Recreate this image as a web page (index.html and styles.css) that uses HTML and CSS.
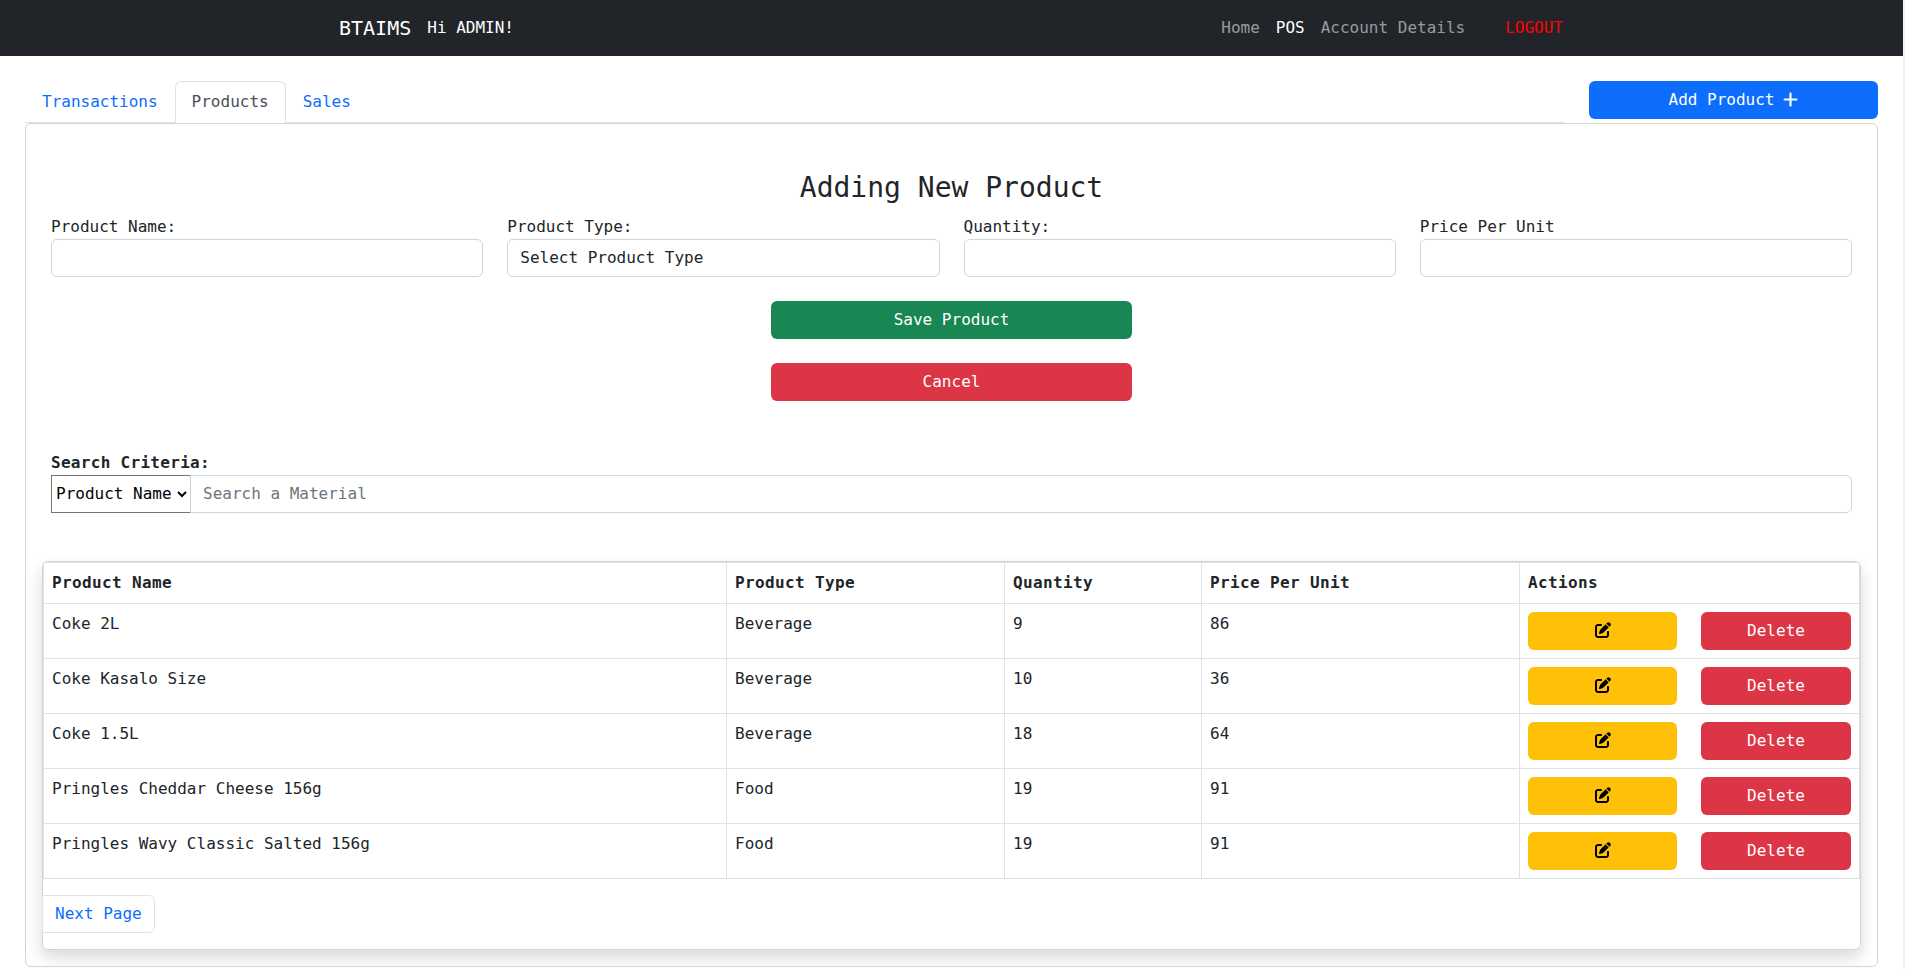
FILE: index.html
```html
<!DOCTYPE html>
<html lang="en">
<head>
<meta charset="utf-8">
<title>BTAIMS</title>
<link rel="stylesheet" href="styles.css">
</head>
<body>
<svg class="sprite" aria-hidden="true">
  <symbol id="edit" viewBox="0 0 512 512"><path d="M471.6 21.7c-21.9-21.9-57.3-21.9-79.2 0L362.3 51.7l97.9 97.9 30.1-30.1c21.9-21.9 21.9-57.3 0-79.2L471.6 21.7zm-299.2 220c-6.1 6.1-10.8 13.6-13.5 21.9l-29.6 88.8c-2.9 8.6-.6 18.1 5.8 24.6s15.9 8.7 24.6 5.8l88.8-29.6c8.2-2.7 15.7-7.4 21.9-13.5L437.7 172.3 339.7 74.3 172.4 241.7zM96 64C43 64 0 107 0 160V416c0 53 43 96 96 96H352c53 0 96-43 96-96V320c0-17.7-14.3-32-32-32s-32 14.3-32 32v96c0 17.7-14.3 32-32 32H96c-17.7 0-32-14.3-32-32V160c0-17.7 14.3-32 32-32h96c17.7 0 32-14.3 32-32s-14.3-32-32-32H96z"/></symbol>
</svg>
<header class="navbar">
  <div class="nav-inner">
    <a class="brand">BTAIMS</a>
    <span class="greeting">Hi ADMIN!</span>
    <nav class="nav-links">
      <a>Home</a><a class="current">POS</a><a>Account Details</a><a class="logout">LOGOUT</a>
    </nav>
  </div>
</header>
<main>
  <div class="top-row">
    <div class="tabs"><a class="tab">Transactions</a><a class="tab active">Products</a><a class="tab">Sales</a></div>
    <button class="btn blue add">Add Product <svg class="plus" viewBox="0 0 448 448"><path d="M256 48c0-17.7-14.3-32-32-32s-32 14.3-32 32V192H48c-17.7 0-32 14.3-32 32s14.3 32 32 32H192V400c0 17.7 14.3 32 32 32s32-14.3 32-32V256H400c17.7 0 32-14.3 32-32s-14.3-32-32-32H256V48z"/></svg></button>
  </div>
  <section class="card">
    <form class="product-form">
      <h3>Adding New Product</h3>
      <div class="fields">
        <label>Product Name:<input class="control"></label>
        <label>Product Type:<select class="control"><option>Select Product Type</option></select></label>
        <label>Quantity:<input class="control"></label>
        <label>Price Per Unit<input class="control"></label>
      </div>
      <div class="form-actions">
        <button type="button" class="btn green">Save Product</button>
        <button type="button" class="btn red">Cancel</button>
      </div>
    </form>
    <div class="search">
      <b>Search Criteria:</b>
      <div class="search-group">
        <select class="criteria"><option>Product Name</option></select>
        <input class="control" placeholder="Search a Material">
      </div>
    </div>
    <div class="table-card">
      <table>
        <colgroup><col class="c-name"><col class="c-type"><col class="c-qty"><col class="c-price"><col></colgroup>
        <thead><tr><th>Product Name</th><th>Product Type</th><th>Quantity</th><th>Price Per Unit</th><th>Actions</th></tr></thead>
        <tbody>
          <tr><td>Coke 2L</td><td>Beverage</td><td>9</td><td>86</td><td><div class="actions"><button class="btn yellow"><svg><use href="#edit"/></svg></button><button class="btn red">Delete</button></div></td></tr>
          <tr><td>Coke Kasalo Size</td><td>Beverage</td><td>10</td><td>36</td><td><div class="actions"><button class="btn yellow"><svg><use href="#edit"/></svg></button><button class="btn red">Delete</button></div></td></tr>
          <tr><td>Coke 1.5L</td><td>Beverage</td><td>18</td><td>64</td><td><div class="actions"><button class="btn yellow"><svg><use href="#edit"/></svg></button><button class="btn red">Delete</button></div></td></tr>
          <tr><td>Pringles Cheddar Cheese 156g</td><td>Food</td><td>19</td><td>91</td><td><div class="actions"><button class="btn yellow"><svg><use href="#edit"/></svg></button><button class="btn red">Delete</button></div></td></tr>
          <tr><td>Pringles Wavy Classic Salted 156g</td><td>Food</td><td>19</td><td>91</td><td><div class="actions"><button class="btn yellow"><svg><use href="#edit"/></svg></button><button class="btn red">Delete</button></div></td></tr>
        </tbody>
      </table>
      <a class="page-link">Next Page</a>
    </div>
  </section>
</main>
</body>
</html>
```
FILE: styles.css
```css
* { box-sizing: border-box; }
html { overflow: hidden; }
body {
  margin: 0;
  height: 969px;
  border-right: 2px solid #f1f1f1;
  background: #fff;
  color: #212529;
  font: 16px/24px "DejaVu Sans Mono", "Lucida Console", monospace;
}
button, input, select { font: inherit; color: inherit; }
.sprite { display: none; }

.navbar { height: 56px; background: #212529; color: #fff; }
.nav-inner { display: flex; align-items: center; height: 56px; padding: 0 340px 0 339px; }
.brand { font-size: 20px; margin-right: 16px; }
.nav-links { display: flex; gap: 16px; margin-left: auto; color: rgba(255, 255, 255, .55); }
.nav-links .current { color: #fff; }
.nav-links .logout { margin-left: 24px; color: #f00; }

main { padding: 25px 25px 0; }
.top-row { display: flex; gap: 24px; align-items: flex-start; height: 42px; }
.tabs { display: flex; flex: 1; height: 42px; border-bottom: 1px solid #dee2e6; }
.tab {
  height: 42px;
  padding: 8px 16px;
  border: 1px solid transparent;
  border-radius: 6px 6px 0 0;
  color: #0d6efd;
}
.tab.active { background: #fff; border-color: #dee2e6 #dee2e6 #fff; color: #495057; }

.btn {
  display: flex;
  align-items: center;
  justify-content: center;
  height: 38px;
  padding: 0 12px;
  border: 0;
  border-radius: 6px;
  color: #fff;
}
.btn svg { width: 16px; height: 16px; margin-bottom: 2px; fill: currentColor; }
.btn .plus { width: 15px; height: 15px; margin: 0 0 1px 9px; }
.blue { background: #0d6efd; }
.green { background: #198754; }
.red { background: #dc3545; }
.yellow { background: #ffc107; color: #000; }
.add { width: 289px; }

.card {
  height: 844px;
  padding: 0 16px;
  border: 1px solid #d3d4d5;
  border-radius: 6px;
  overflow: hidden;
}
.product-form { padding: 46px 9px 0; }
h3 { margin: 0 0 9px; font-size: 28px; font-weight: 400; line-height: 36px; text-align: center; }
.fields { display: grid; grid-template-columns: repeat(4, 1fr); gap: 24px; }
.fields label { display: block; }
.control {
  display: block;
  width: 100%;
  height: 38px;
  padding: 6px 12px;
  border: 1px solid #ced4da;
  border-radius: 6px;
  background: #fff;
  appearance: none;
}
.control::placeholder { color: #6c757d; opacity: 1; }
.form-actions { display: grid; gap: 24px; width: 361px; margin: 24px auto 0; }

.search { padding: 50px 9px 0; }
.search b { display: block; letter-spacing: .3px; }
.search-group { display: flex; }
.criteria {
  width: 140px;
  flex: none;
  height: 38px;
  padding: 0 0 1px;
  border: 1px solid #767676;
  border-radius: 0;
  background: #fff;
  color: #000;
}
.search-group .control { flex: 1; margin-left: -1px; padding-bottom: 7px; border-radius: 0 6px 6px 0; }

.table-card {
  width: 1819px;
  height: 389px;
  margin: 48px 0 0;
  border: 1px solid #d3d4d5;
  border-radius: 6px;
  box-shadow: 0 8px 16px rgba(0, 0, 0, .15);
}
table { width: 1817px; border-collapse: collapse; table-layout: fixed; }
.c-name { width: 683px; }
.c-type { width: 278px; }
.c-qty { width: 197px; }
.c-price { width: 318px; }
th, td { padding: 8px; border: 1px solid #dee2e6; text-align: left; vertical-align: top; }
th { letter-spacing: .37px; }
.actions { display: grid; grid-template-columns: 149px 1fr; gap: 24px; }
.page-link {
  display: inline-block;
  height: 38px;
  margin: 16px 0 0 -1px;
  padding: 6px 12px;
  border: 1px solid #dee2e6;
  border-radius: 0 6px 6px 0;
  color: #0d6efd;
}
```
